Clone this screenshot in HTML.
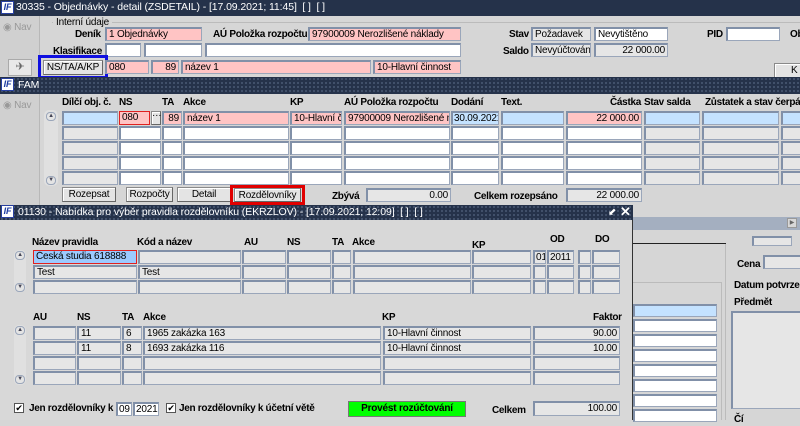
<!DOCTYPE html>
<html><head><meta charset="utf-8"><style>
*{margin:0;padding:0;box-sizing:border-box}
body{width:800px;height:420px;overflow:hidden;background:#d6d6d6;font-family:"Liberation Sans",sans-serif;font-size:10px;letter-spacing:-0.2px;color:#000;position:relative}
div{position:absolute}
.tb{background-color:#25324a;background-image:radial-gradient(#4a5a74 0.8px,transparent 1px);background-size:4px 4px;color:#fff;font-size:10.5px;letter-spacing:-0.1px;line-height:15px;white-space:nowrap}
.ic{background:#fff;border:1px solid #2840a0;width:13px;height:13px;top:1px;left:1px;color:#1a3aa0;font-weight:bold;font-style:italic;font-size:9px;line-height:11px;text-align:center}
.f{border:1px solid #9aa6ba;border-top:2px solid #8190a8;border-left:2px solid #8190a8;background:#e6e6e6;line-height:11px;padding:0 2px;white-space:nowrap;overflow:hidden;height:14px}
.w{background:#fff}.p{background:#ffc4c4}.b{background:#c4e2ff}
.r{text-align:right}
.l{font-weight:bold;white-space:nowrap;line-height:12px;letter-spacing:-0.3px}
.btn{border:1px solid #8a8a8a;border-right-color:#666;border-bottom-color:#666;background:#e4e4e4;text-align:center;line-height:13px;height:15px;box-shadow:inset 1px 1px 0 #fff;white-space:nowrap}
.sc{width:10px;height:9px;border:1px solid #9aa6ba;border-radius:4px;background:#e4e4e4;font-size:6px;line-height:7px;text-align:center;color:#445}
</style></head><body>
<div class="tb" style="left:0;top:0;width:800px;height:16px;background-image:none"><div class="ic">IF</div><div style="left:16px;top:0">30335 - Objednávky - detail (ZSDETAIL) - [17.09.2021; 11:45]&nbsp; [ ]&nbsp; [ ]</div></div>
<div style="left:0;top:16px;width:40px;height:61px;background:#d0d0d0;border-right:1px solid #b8b8b8"></div>
<div style="left:3px;top:22px;color:#999;font-size:10px">◉ Nav</div>
<div style="left:8px;top:59px;width:24px;height:17px;border:1px solid #aaa;background:#e8e8e8;color:#666;text-align:center;font-size:11px">✈</div>
<div style="left:52px;top:22px;width:750px;border-top:1px solid #bbb"></div>
<div style="left:53px;top:17px;background:#d6d6d6;padding:0 3px;line-height:11px">Interní údaje</div>
<div class="l" style="left:75px;top:29px">Deník</div>
<div class="f p" style="left:105px;top:27px;width:97px">1 Objednávky</div>
<div class="l" style="left:213px;top:29px">AÚ Položka rozpočtu</div>
<div class="f p" style="left:308px;top:27px;width:153px">97900009 Nerozlišené náklady</div>
<div class="l" style="left:53px;top:46px">Klasifikace</div>
<div class="f w" style="left:105px;top:43px;width:36px"></div>
<div class="f w" style="left:144px;top:43px;width:58px"></div>
<div class="f w" style="left:205px;top:43px;width:256px"></div>
<div style="left:38px;top:55px;width:70px;height:24px;border:3px solid #1010e0"></div>
<div class="btn" style="left:43px;top:60px;width:60px">NS/TA/A/KP</div>
<div class="f p" style="left:105px;top:60px;width:44px">080</div>
<div class="f p r" style="left:151px;top:60px;width:28px">89</div>
<div class="f p" style="left:181px;top:60px;width:190px">název 1</div>
<div class="f p" style="left:373px;top:60px;width:88px">10-Hlavní činnost</div>
<div class="l" style="left:509px;top:29px">Stav</div>
<div class="f" style="left:531px;top:27px;width:60px">Požadavek</div>
<div class="f w" style="left:594px;top:27px;width:74px">Nevytištěno</div>
<div class="l" style="left:503px;top:46px">Saldo</div>
<div class="f" style="left:531px;top:43px;width:60px">Nevyúčtováno</div>
<div class="f r" style="left:594px;top:43px;width:74px">22 000.00</div>
<div class="l" style="left:707px;top:29px">PID</div>
<div class="f w" style="left:726px;top:27px;width:54px"></div>
<div class="l" style="left:790px;top:29px">Ob</div>
<div class="btn" style="left:774px;top:63px;width:30px;text-align:left;padding-left:16px">K</div>
<div class="tb" style="left:0;top:77px;width:800px;height:17px"><div class="ic">IF</div><div style="left:18px;top:1px">FAM</div></div>
<div style="left:0;top:94px;width:40px;height:111px;background:#d0d0d0;border-right:1px solid #b8b8b8"></div>
<div style="left:3px;top:100px;color:#999;font-size:10px">◉ Nav</div>
<div style="left:44px;top:110px;width:14px;height:76px;background:#e0e0e0;border-radius:5px"></div>
<div class="sc" style="left:46px;top:112px">▲</div>
<div class="sc" style="left:46px;top:176px">▼</div>
<div class="l" style="left:62px;top:97px">Dílčí obj. č.</div>
<div class="l" style="left:119px;top:97px">NS</div>
<div class="l" style="left:162px;top:97px">TA</div>
<div class="l" style="left:183px;top:97px">Akce</div>
<div class="l" style="left:290px;top:97px">KP</div>
<div class="l" style="left:344px;top:97px">AÚ Položka rozpočtu</div>
<div class="l" style="left:451px;top:97px">Dodání</div>
<div class="l" style="left:501px;top:97px">Text.</div>
<div class="l" style="left:610px;top:97px">Částka</div>
<div class="l" style="left:644px;top:97px">Stav salda</div>
<div class="l" style="left:705px;top:97px">Zůstatek a stav čerpá</div>
<div class="f b" style="left:62px;top:111px;width:56px"></div>
<div class="f p" style="left:119px;top:111px;width:31px;border:1px solid #e02020">080</div>
<div class="btn" style="left:151px;top:111px;width:10px;height:14px;line-height:8px">···</div>
<div class="f p r" style="left:162px;top:111px;width:20px">89</div>
<div class="f p" style="left:183px;top:111px;width:106px">název 1</div>
<div class="f p" style="left:290px;top:111px;width:52px">10-Hlavní čin</div>
<div class="f p" style="left:344px;top:111px;width:106px">97900009 Nerozlišené nákl</div>
<div class="f b" style="left:451px;top:111px;width:48px;padding:0 1px">30.09.2021</div>
<div class="f b" style="left:501px;top:111px;width:63px"></div>
<div class="f p r" style="left:566px;top:111px;width:76px">22 000.00</div>
<div class="f b" style="left:644px;top:111px;width:56px"></div>
<div class="f b" style="left:702px;top:111px;width:77px"></div>
<div class="f b" style="left:781px;top:111px;width:20px"></div>
<div class="f" style="left:62px;top:126px;width:56px"></div><div class="f w" style="left:119px;top:126px;width:42px"></div><div class="f w" style="left:162px;top:126px;width:20px"></div><div class="f w" style="left:183px;top:126px;width:106px"></div><div class="f w" style="left:290px;top:126px;width:52px"></div><div class="f w" style="left:344px;top:126px;width:106px"></div><div class="f w" style="left:451px;top:126px;width:48px"></div><div class="f w" style="left:501px;top:126px;width:63px"></div><div class="f w" style="left:566px;top:126px;width:76px"></div><div class="f" style="left:644px;top:126px;width:56px"></div><div class="f" style="left:702px;top:126px;width:77px"></div><div class="f" style="left:781px;top:126px;width:20px"></div>
<div class="f" style="left:62px;top:141px;width:56px"></div><div class="f w" style="left:119px;top:141px;width:42px"></div><div class="f w" style="left:162px;top:141px;width:20px"></div><div class="f w" style="left:183px;top:141px;width:106px"></div><div class="f w" style="left:290px;top:141px;width:52px"></div><div class="f w" style="left:344px;top:141px;width:106px"></div><div class="f w" style="left:451px;top:141px;width:48px"></div><div class="f w" style="left:501px;top:141px;width:63px"></div><div class="f w" style="left:566px;top:141px;width:76px"></div><div class="f" style="left:644px;top:141px;width:56px"></div><div class="f" style="left:702px;top:141px;width:77px"></div><div class="f" style="left:781px;top:141px;width:20px"></div>
<div class="f" style="left:62px;top:156px;width:56px"></div><div class="f w" style="left:119px;top:156px;width:42px"></div><div class="f w" style="left:162px;top:156px;width:20px"></div><div class="f w" style="left:183px;top:156px;width:106px"></div><div class="f w" style="left:290px;top:156px;width:52px"></div><div class="f w" style="left:344px;top:156px;width:106px"></div><div class="f w" style="left:451px;top:156px;width:48px"></div><div class="f w" style="left:501px;top:156px;width:63px"></div><div class="f w" style="left:566px;top:156px;width:76px"></div><div class="f" style="left:644px;top:156px;width:56px"></div><div class="f" style="left:702px;top:156px;width:77px"></div><div class="f" style="left:781px;top:156px;width:20px"></div>
<div class="f" style="left:62px;top:171px;width:56px"></div><div class="f w" style="left:119px;top:171px;width:42px"></div><div class="f w" style="left:162px;top:171px;width:20px"></div><div class="f w" style="left:183px;top:171px;width:106px"></div><div class="f w" style="left:290px;top:171px;width:52px"></div><div class="f w" style="left:344px;top:171px;width:106px"></div><div class="f w" style="left:451px;top:171px;width:48px"></div><div class="f w" style="left:501px;top:171px;width:63px"></div><div class="f w" style="left:566px;top:171px;width:76px"></div><div class="f" style="left:644px;top:171px;width:56px"></div><div class="f" style="left:702px;top:171px;width:77px"></div><div class="f" style="left:781px;top:171px;width:20px"></div>
<div class="btn" style="left:62px;top:187px;width:54px">Rozepsat</div>
<div class="btn" style="left:126px;top:187px;width:47px">Rozpočty</div>
<div class="btn" style="left:177px;top:187px;width:54px">Detail</div>
<div style="left:230px;top:185px;width:75px;height:20px;border:3px solid #e00000"></div>
<div class="btn" style="left:234px;top:188px;width:67px;height:14px">Rozdělovníky</div>
<div class="l" style="left:332px;top:191px">Zbývá</div>
<div class="f r" style="left:366px;top:188px;width:85px">0.00</div>
<div class="l" style="left:474px;top:191px">Celkem rozepsáno</div>
<div class="f r" style="left:566px;top:188px;width:76px">22 000.00</div>
<div style="left:633px;top:217px;width:167px;height:13px;background:#a4afc0"></div>
<div style="left:787px;top:218px;width:10px;height:10px;background:#d8d8d8;border:1px solid #999;font-size:6px;line-height:8px;text-align:center;color:#666">▶</div>
<div style="left:633px;top:243px;width:93px;height:1px;background:#222"></div>
<div style="left:725px;top:244px;width:1px;height:176px;background:#bbb"></div>
<div style="left:633px;top:282px;width:89px;height:138px;border-top:1px solid #bbb;border-right:1px solid #bbb"></div>
<div class="f" style="left:752px;top:236px;width:40px;height:10px"></div>
<div class="l" style="left:737px;top:259px">Cena</div>
<div class="f" style="left:763px;top:255px;width:40px;height:14px"></div>
<div class="l" style="left:734px;top:280px">Datum potvrzen</div>
<div class="l" style="left:734px;top:297px">Předmět</div>
<div class="f" style="left:731px;top:311px;width:72px;height:98px"></div>
<div class="l" style="left:734px;top:414px">Čí</div>
<div class="f b" style="left:633px;top:304px;width:84px;height:13px"></div>
<div class="f w" style="left:633px;top:319px;width:84px;height:13px"></div>
<div class="f w" style="left:633px;top:334px;width:84px;height:13px"></div>
<div class="f w" style="left:633px;top:349px;width:84px;height:13px"></div>
<div class="f w" style="left:633px;top:364px;width:84px;height:13px"></div>
<div class="f w" style="left:633px;top:379px;width:84px;height:13px"></div>
<div class="f w" style="left:633px;top:394px;width:84px;height:13px"></div>
<div class="f w" style="left:633px;top:409px;width:84px;height:13px"></div>
<div style="left:0;top:205px;width:633px;height:215px;background:#d8d8d8;border-right:1px solid #333"></div>
<div class="tb" style="left:0;top:205px;width:633px;height:15px"><div class="ic" style="top:0">IF</div><div style="left:18px;top:0">01130 - Nabídka pro výběr pravidla rozdělovníku (EKRZLOV) - [17.09.2021; 12:09]&nbsp; [ ]&nbsp; [ ]</div><div style="left:608px;top:0;font-size:10px">⬋</div><div style="left:620px;top:-1px;font-size:13px;font-weight:bold">✕</div></div>
<div class="l" style="left:32px;top:237px">Název pravidla</div>
<div class="l" style="left:137px;top:237px">Kód a název</div>
<div class="l" style="left:244px;top:237px">AU</div>
<div class="l" style="left:287px;top:237px">NS</div>
<div class="l" style="left:332px;top:237px">TA</div>
<div class="l" style="left:352px;top:237px">Akce</div>
<div class="l" style="left:472px;top:240px">KP</div>
<div class="l" style="left:550px;top:234px">OD</div>
<div class="l" style="left:595px;top:234px">DO</div>
<div style="left:14px;top:250px;width:12px;height:42px;background:#e0e0e0;border-radius:5px"></div>
<div class="sc" style="left:15px;top:251px">▲</div>
<div class="sc" style="left:15px;top:283px">▼</div>
<div class="f" style="left:33px;top:250px;width:104px;background:#9ccaff;border:1px solid #e02020">Česká studia 618888</div>
<div class="f" style="left:138px;top:250px;width:103px"></div><div class="f" style="left:242px;top:250px;width:44px"></div><div class="f" style="left:287px;top:250px;width:44px"></div><div class="f" style="left:332px;top:250px;width:19px"></div><div class="f" style="left:353px;top:250px;width:118px"></div><div class="f" style="left:472px;top:250px;width:59px"></div><div class="f" style="left:533px;top:250px;width:13px;padding:0 1px">01</div><div class="f" style="left:547px;top:250px;width:27px;padding:0 1px">2011</div><div class="f" style="left:578px;top:250px;width:13px"></div><div class="f" style="left:592px;top:250px;width:28px"></div>
<div class="f" style="left:33px;top:265px;width:104px">Test</div><div class="f" style="left:138px;top:265px;width:103px">Test</div><div class="f" style="left:242px;top:265px;width:44px"></div><div class="f" style="left:287px;top:265px;width:44px"></div><div class="f" style="left:332px;top:265px;width:19px"></div><div class="f" style="left:353px;top:265px;width:118px"></div><div class="f" style="left:472px;top:265px;width:59px"></div><div class="f" style="left:533px;top:265px;width:13px"></div><div class="f" style="left:547px;top:265px;width:27px"></div><div class="f" style="left:578px;top:265px;width:13px"></div><div class="f" style="left:592px;top:265px;width:28px"></div>
<div class="f" style="left:33px;top:280px;width:104px"></div><div class="f" style="left:138px;top:280px;width:103px"></div><div class="f" style="left:242px;top:280px;width:44px"></div><div class="f" style="left:287px;top:280px;width:44px"></div><div class="f" style="left:332px;top:280px;width:19px"></div><div class="f" style="left:353px;top:280px;width:118px"></div><div class="f" style="left:472px;top:280px;width:59px"></div><div class="f" style="left:533px;top:280px;width:13px"></div><div class="f" style="left:547px;top:280px;width:27px"></div><div class="f" style="left:578px;top:280px;width:13px"></div><div class="f" style="left:592px;top:280px;width:28px"></div>
<div class="l" style="left:33px;top:312px">AU</div>
<div class="l" style="left:77px;top:312px">NS</div>
<div class="l" style="left:122px;top:312px">TA</div>
<div class="l" style="left:143px;top:312px">Akce</div>
<div class="l" style="left:382px;top:312px">KP</div>
<div class="l" style="left:593px;top:312px">Faktor</div>
<div style="left:14px;top:325px;width:12px;height:60px;background:#e0e0e0;border-radius:5px"></div>
<div class="sc" style="left:15px;top:326px">▲</div>
<div class="sc" style="left:15px;top:375px">▼</div>
<div class="f" style="left:33px;top:326px;width:43px"></div><div class="f" style="left:77px;top:326px;width:44px">11</div><div class="f" style="left:122px;top:326px;width:20px">6</div><div class="f" style="left:143px;top:326px;width:238px">1965 zakázka 163</div><div class="f" style="left:383px;top:326px;width:148px">10-Hlavní činnost</div><div class="f r" style="left:533px;top:326px;width:87px">90.00</div>
<div class="f" style="left:33px;top:341px;width:43px"></div><div class="f" style="left:77px;top:341px;width:44px">11</div><div class="f" style="left:122px;top:341px;width:20px">8</div><div class="f" style="left:143px;top:341px;width:238px">1693 zakázka 116</div><div class="f" style="left:383px;top:341px;width:148px">10-Hlavní činnost</div><div class="f r" style="left:533px;top:341px;width:87px">10.00</div>
<div class="f" style="left:33px;top:356px;width:43px"></div><div class="f" style="left:77px;top:356px;width:44px"></div><div class="f" style="left:122px;top:356px;width:20px"></div><div class="f" style="left:143px;top:356px;width:238px"></div><div class="f" style="left:383px;top:356px;width:148px"></div><div class="f" style="left:533px;top:356px;width:87px"></div>
<div class="f" style="left:33px;top:371px;width:43px"></div><div class="f" style="left:77px;top:371px;width:44px"></div><div class="f" style="left:122px;top:371px;width:20px"></div><div class="f" style="left:143px;top:371px;width:238px"></div><div class="f" style="left:383px;top:371px;width:148px"></div><div class="f" style="left:533px;top:371px;width:87px"></div>
<div style="left:14px;top:403px;width:10px;height:10px;border:1px solid #555;background:#fff;font-size:9px;line-height:8px;text-align:center">✔</div>
<div class="l" style="left:29px;top:403px">Jen rozdělovníky k</div>
<div class="f w" style="left:116px;top:402px;width:16px;padding:0 1px">09</div>
<div class="f w" style="left:133px;top:402px;width:26px;padding:0 1px">2021</div>
<div style="left:166px;top:403px;width:10px;height:10px;border:1px solid #555;background:#fff;font-size:9px;line-height:8px;text-align:center">✔</div>
<div class="l" style="left:179px;top:403px">Jen rozdělovníky k účetní větě</div>
<div style="left:348px;top:401px;width:118px;height:16px;background:#00ff00;border:1px solid #777;text-align:center;font-weight:bold;line-height:14px">Provést rozúčtování</div>
<div class="l" style="left:492px;top:405px">Celkem</div>
<div class="f r" style="left:533px;top:401px;width:87px;height:15px">100.00</div>
</body></html>
